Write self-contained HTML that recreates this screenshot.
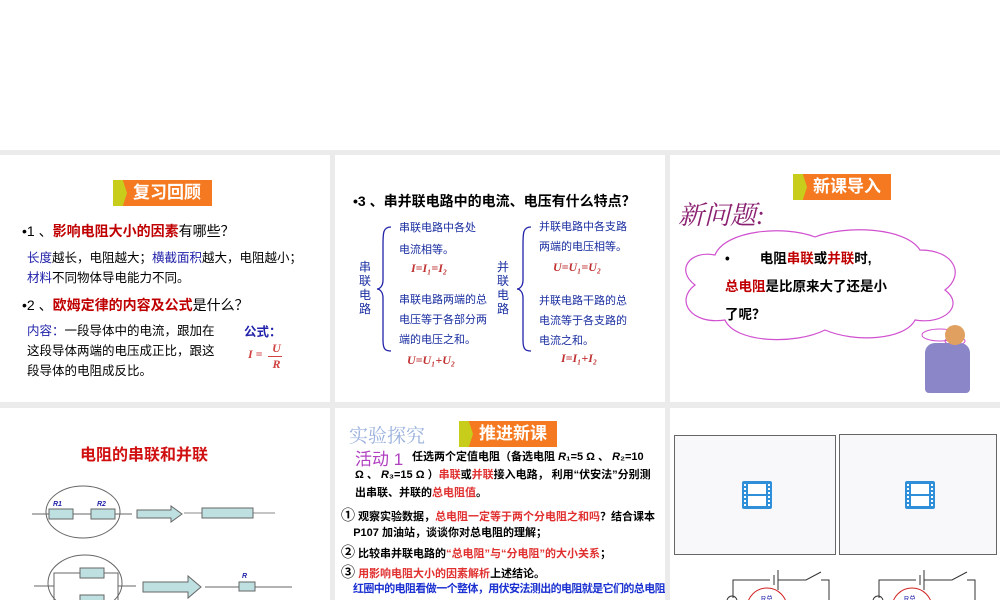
<!DOCTYPE html>
<html><head><meta charset="utf-8"><style>
*{margin:0;padding:0;box-sizing:border-box}
body{width:1000px;height:600px;overflow:hidden;background:#fff;font-family:"Liberation Sans","Noto Sans CJK SC",sans-serif;position:relative}
.bg{position:absolute;left:0;top:150px;width:1000px;height:450px;background:#ebebeb}
.s{position:absolute;background:#fff;overflow:hidden}
.a{position:absolute;white-space:nowrap}
.tag{position:absolute;height:26px;background:#f47920;color:#fff;font-weight:bold;font-size:17px;line-height:26px;padding-left:20px;padding-right:8px}
.tag:before{content:"";position:absolute;left:0;top:0;width:14px;height:26px;background:#c8cc1a;clip-path:polygon(0 0,70% 0,100% 50%,70% 100%,0 100%)}
.r{color:#c00000;font-weight:bold}.b{color:#2222aa}.bl{color:#1a2ea0}
</style></head><body>
<div class="bg"></div>

<div class="s" style="left:0;top:155px;width:330px;height:247px">
 <div class="tag" style="left:113px;top:25px;width:99px">复习回顾</div>
 <div class="a" style="left:22px;top:66px;font-size:14px">•1 、<span class="r">影响电阻大小的因素</span>有哪些？</div>
 <div class="a" style="left:27px;top:93px;font-size:12.5px;line-height:20px"><span class="b">长度</span>越长，电阻越大；<span class="b">横截面积</span>越大，电阻越小；<br><span class="b">材料</span>不同物体导电能力不同。</div>
 <div class="a" style="left:22px;top:140px;font-size:14px">•2 、<span class="r">欧姆定律的内容及公式</span>是什么？</div>
 <div class="a" style="left:27px;top:166px;font-size:12.5px;line-height:20px"><span class="b">内容：</span>一段导体中的电流，跟加在<br>这段导体两端的电压成正比，跟这<br>段导体的电阻成反比。</div>
 <div class="a b" style="left:244px;top:166px;font-size:12.5px;font-weight:bold">公式：</div>
 <div class="a" style="left:248px;top:192px;color:#d04040;font-style:italic;font-weight:bold;font-family:'Liberation Serif',serif;font-size:12px">I =</div>
 <div class="a" style="left:271px;top:186px;color:#d04040;font-style:italic;font-weight:bold;font-family:'Liberation Serif',serif;font-size:12px;text-align:center;line-height:15px">U<div style="border-top:1px solid #d04040;width:14px;margin-left:-3px"></div>R</div>
</div>

<div class="s" style="left:335px;top:155px;width:330px;height:247px">
 <div class="a" style="left:18px;top:36px;font-size:14px;font-weight:bold">•3 、串并联电路中的电流、电压有什么特点？</div>
 <div class="a bl" style="left:24px;top:105px;font-size:12px;line-height:14px;width:12px;white-space:normal">串联电路</div>
 <div class="a bl" style="left:162px;top:105px;font-size:12px;line-height:14px;width:12px;white-space:normal">并联电路</div>
 <svg class="a" style="left:40px;top:70px" width="20" height="130"><path d="M16 2 C8 2 8 8 8 20 L8 55 C8 62 4 64 2 64 C4 64 8 66 8 73 L8 115 C8 124 10 126 16 126" fill="none" stroke="#2222aa" stroke-width="1.3"/></svg>
 <svg class="a" style="left:180px;top:70px" width="20" height="130"><path d="M16 2 C8 2 8 8 8 20 L8 55 C8 62 4 64 2 64 C4 64 8 66 8 73 L8 115 C8 124 10 126 16 126" fill="none" stroke="#2222aa" stroke-width="1.3"/></svg>
 <div class="a bl" style="left:64px;top:62px;font-size:11px;line-height:22px">串联电路中各处<br>电流相等。</div>
 <div class="a" style="left:76px;top:106px;color:#c03030;font-style:italic;font-weight:bold;font-family:'Liberation Serif',serif;font-size:12px">I=I₁=I₂</div>
 <div class="a bl" style="left:64px;top:135px;font-size:11px;line-height:20px">串联电路两端的总<br>电压等于各部分两<br>端的电压之和。</div>
 <div class="a" style="left:72px;top:198px;color:#c03030;font-style:italic;font-weight:bold;font-family:'Liberation Serif',serif;font-size:12px">U=U₁+U₂</div>
 <div class="a bl" style="left:204px;top:62px;font-size:11px;line-height:20px">并联电路中各支路<br>两端的电压相等。</div>
 <div class="a" style="left:218px;top:105px;color:#c03030;font-style:italic;font-weight:bold;font-family:'Liberation Serif',serif;font-size:12px">U=U₁=U₂</div>
 <div class="a bl" style="left:204px;top:136px;font-size:11px;line-height:20px">并联电路干路的总<br>电流等于各支路的<br>电流之和。</div>
 <div class="a" style="left:226px;top:196px;color:#c03030;font-style:italic;font-weight:bold;font-family:'Liberation Serif',serif;font-size:12px">I=I₁+I₂</div>
</div>

<div class="s" style="left:670px;top:155px;width:330px;height:247px">
 <div class="tag" style="left:123px;top:19px;width:98px">新课导入</div>
 <div class="a" style="left:8px;top:40px;font-size:26px;color:#8a2070;font-family:'Liberation Serif','Noto Serif CJK SC',serif;font-style:italic">新问题:</div>
 <svg class="a" style="left:5px;top:70px" width="300" height="120"><path d="M40 30 C50 5 110 0 140 12 C170 0 230 2 245 25 C280 25 290 50 270 65 C290 80 270 100 240 95 C230 115 180 118 150 105 C120 120 60 118 50 95 C15 100 0 75 20 60 C0 45 15 25 40 30 Z" fill="#fff" stroke="#d050d0" stroke-width="1.2"/><ellipse cx="265" cy="110" rx="18" ry="6" fill="none" stroke="#d050d0"/><ellipse cx="280" cy="116" rx="10" ry="4" fill="none" stroke="#d050d0"/></svg>
 <div class="a" style="left:55px;top:90px;font-size:13.5px;font-weight:bold;line-height:28px">•&nbsp;&nbsp;&nbsp;&nbsp;&nbsp;&nbsp;&nbsp;&nbsp;电阻<span class="r">串联</span>或<span class="r">并联</span>时,<br><span class="r">总电阻</span>是比原来大了还是小<br>了呢？</div>
 <div class="a" style="left:255px;top:188px;width:45px;height:50px;background:#8a86c8;border-radius:10px 10px 4px 4px"></div>
 <div class="a" style="left:275px;top:170px;width:20px;height:20px;background:#e0a060;border-radius:50%"></div>
</div>

<div class="s" style="left:0;top:408px;width:330px;height:192px">
 <div class="a" style="left:80px;top:33px;font-size:16px;font-weight:bold;color:#d01010">电阻的串联和并联</div>
 <svg class="a" style="left:0;top:70px" width="330" height="130">
  <ellipse cx="83" cy="34" rx="37" ry="26" fill="none" stroke="#666"/>
  <line x1="32" y1="36" x2="132" y2="36" stroke="#666"/>
  <rect x="49" y="31" width="24" height="10" fill="#bfe0e0" stroke="#666"/><rect x="91" y="31" width="24" height="10" fill="#bfe0e0" stroke="#666"/>
  <text x="53" y="28" font-size="7" fill="#22a" font-style="italic" font-weight="bold">R1</text><text x="97" y="28" font-size="7" fill="#22a" font-style="italic" font-weight="bold">R2</text>
  <path d="M137 32 h34 v-4 l11 8 l-11 8 v-4 h-34z" fill="#bfe0e0" stroke="#666"/>
  <line x1="184" y1="35" x2="275" y2="35" stroke="#888"/><rect x="202" y="30" width="51" height="10" fill="#bfe0e0" stroke="#666"/>
  <ellipse cx="85" cy="105" rx="37" ry="28" fill="none" stroke="#666"/>
  <path d="M34 108 h20 M54 108 V95 h64 v13 h18 M54 108 v24 h64 v-24" fill="none" stroke="#666"/>
  <rect x="80" y="90" width="24" height="10" fill="#bfe0e0" stroke="#666"/><rect x="80" y="117" width="24" height="10" fill="#bfe0e0" stroke="#666"/>
  <path d="M143 104 h45 v-6 l13 11 l-13 11 v-6 h-45z" fill="#bfe0e0" stroke="#666"/>
  <line x1="205" y1="109" x2="292" y2="109" stroke="#666"/><rect x="239" y="104" width="16" height="9" fill="#bfe0e0" stroke="#666"/>
  <text x="242" y="100" font-size="7" fill="#22a" font-style="italic" font-weight="bold">R</text>
 </svg>
</div>

<div class="s" style="left:335px;top:408px;width:330px;height:192px">
 <div class="a" style="left:14px;top:13px;font-size:19px;color:#9ab0dd;font-family:'Liberation Serif','Noto Serif CJK SC',serif">实验探究</div>
 <div class="tag" style="left:124px;top:13px;width:98px">推进新课</div>
 <div class="a" style="left:20px;top:37px;font-size:17px;color:#b040c0">活动 1</div>
 <div class="a" style="left:22px;top:40px;font-size:11px;line-height:18px;font-weight:bold;padding-left:55px">任选两个定值电阻（备选电阻 <i>R</i>₁=5 Ω 、 <i>R</i>₂=10</div>
 <div class="a" style="left:20px;top:58px;font-size:11px;line-height:18px;font-weight:bold">Ω 、 <i>R</i>₃=15 Ω ）<span style="color:#e03030">串联</span>或<span style="color:#e03030">并联</span>接入电路， 利用“伏安法”分别测<br>出串联、并联的<span style="color:#e03030">总电阻值</span>。</div>
 <div class="a" style="left:6px;top:99px;font-size:11px;line-height:16px;font-weight:bold"><span style="font-size:14px">①</span> 观察实验数据，<span style="color:#e03030">总电阻一定等于两个分电阻之和吗</span>？结合课本<br>&nbsp;&nbsp;&nbsp;&nbsp;P107 加油站，谈谈你对总电阻的理解；</div>
 <div class="a" style="left:6px;top:134px;font-size:11px;font-weight:bold"><span style="font-size:14px">②</span> 比较串并联电路的<span style="color:#e03030">“总电阻”与“分电阻”的大小关系</span>；</div>
 <div class="a" style="left:6px;top:154px;font-size:11px;font-weight:bold"><span style="font-size:14px">③</span> <span style="color:#e03030">用影响电阻大小的因素解析</span>上述结论。</div>
 <div class="a" style="left:18px;top:172px;font-size:11px;font-weight:bold;color:#1a30d0;letter-spacing:-0.6px">红圈中的电阻看做一个整体，用伏安法测出的电阻就是它们的总电阻！</div>
</div>

<div class="s" style="left:670px;top:408px;width:330px;height:192px">
 <div class="a" style="left:4px;top:27px;width:162px;height:120px;background:#f8f8fa;border:1.5px solid #666"></div>
 <div class="a" style="left:169px;top:26px;width:158px;height:121px;background:#f8f8fa;border:1.5px solid #666"></div>
 <svg class="a" style="left:70px;top:70px" width="34" height="34"><rect x="2" y="3" width="30" height="28" rx="2" fill="#2f8fd8"/><rect x="8" y="6" width="18" height="10" fill="#fff"/><rect x="8" y="18" width="18" height="10" fill="#fff"/><g fill="#fff"><rect x="4" y="6" width="2" height="2"/><rect x="4" y="10" width="2" height="2"/><rect x="4" y="14" width="2" height="2"/><rect x="4" y="18" width="2" height="2"/><rect x="4" y="22" width="2" height="2"/><rect x="4" y="26" width="2" height="2"/><rect x="28" y="6" width="2" height="2"/><rect x="28" y="10" width="2" height="2"/><rect x="28" y="14" width="2" height="2"/><rect x="28" y="18" width="2" height="2"/><rect x="28" y="22" width="2" height="2"/><rect x="28" y="26" width="2" height="2"/></g></svg>
 <svg class="a" style="left:233px;top:70px" width="34" height="34"><rect x="2" y="3" width="30" height="28" rx="2" fill="#2f8fd8"/><rect x="8" y="6" width="18" height="10" fill="#fff"/><rect x="8" y="18" width="18" height="10" fill="#fff"/><g fill="#fff"><rect x="4" y="6" width="2" height="2"/><rect x="4" y="10" width="2" height="2"/><rect x="4" y="14" width="2" height="2"/><rect x="4" y="18" width="2" height="2"/><rect x="4" y="22" width="2" height="2"/><rect x="4" y="26" width="2" height="2"/><rect x="28" y="6" width="2" height="2"/><rect x="28" y="10" width="2" height="2"/><rect x="28" y="14" width="2" height="2"/><rect x="28" y="18" width="2" height="2"/><rect x="28" y="22" width="2" height="2"/><rect x="28" y="26" width="2" height="2"/></g></svg>
 <svg class="a" style="left:0;top:150px" width="330" height="42">
  <path d="M63 40 V22 h37 M104 17 v10 M108 12 v20 M108 22 h28 l15-8 M151 22 h8 v30" fill="none" stroke="#333"/>
  <circle cx="62" cy="43" r="5" fill="none" stroke="#333"/><circle cx="97" cy="50" r="20" fill="none" stroke="#d02020"/>
  <text x="91" y="43" font-size="7" fill="#22a">R总</text>
  <path d="M209 40 V22 h37 M250 17 v10 M254 12 v20 M254 22 h28 l15-8 M297 22 h8 v30" fill="none" stroke="#333"/>
  <circle cx="208" cy="43" r="5" fill="none" stroke="#333"/><circle cx="242" cy="50" r="20" fill="none" stroke="#d02020"/>
  <text x="234" y="43" font-size="7" fill="#22a">R总</text>
 </svg>
</div>
</body></html>
